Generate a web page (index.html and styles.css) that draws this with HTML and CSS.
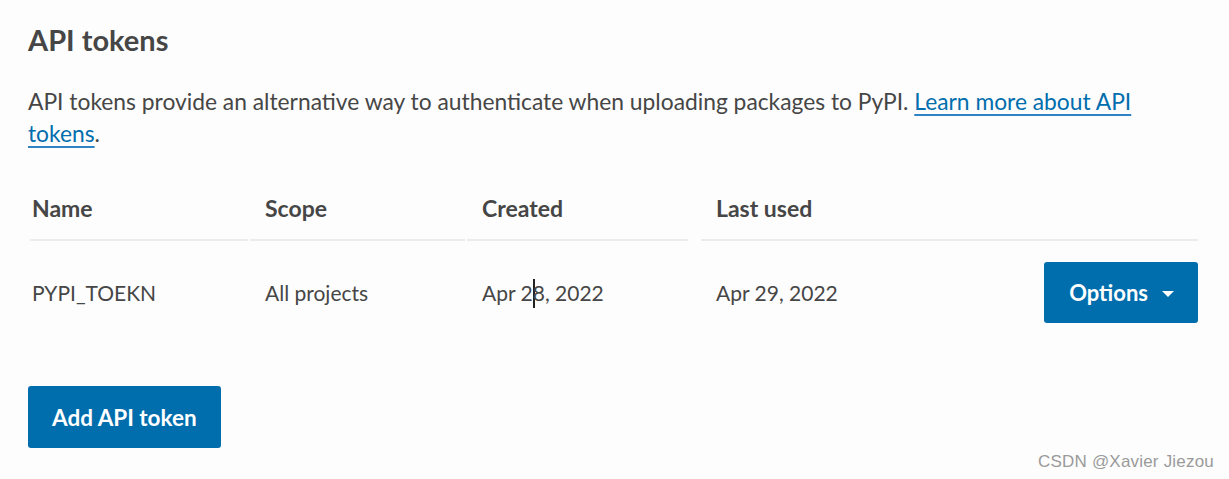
FILE: index.html
```html
<!DOCTYPE html>
<html lang="en">
<head>
<meta charset="utf-8">
<title>API tokens</title>
<link rel="stylesheet" href="styles.css">
</head>
<body>
<main class="section">
  <h2 class="section__title">API tokens</h2>
  <p class="section__lead">API tokens provide an alternative way to authenticate when uploading packages to PyPI. <a class="link" href="#">Learn more about API tokens</a>.</p>
  <table class="tokens">
    <thead>
      <tr>
        <th class="tokens__th tokens__th--name">Name</th>
        <th class="tokens__th tokens__th--scope">Scope</th>
        <th class="tokens__th tokens__th--created">Created</th>
        <th class="tokens__th" colspan="2">Last used</th>
      </tr>
    </thead>
    <tbody>
      <tr>
        <td class="tokens__td tokens__td--name">PYPI_TOEKN</td>
        <td class="tokens__td">All projects</td>
        <td class="tokens__td">Apr 2<span class="caret"></span>8, 2022</td>
        <td class="tokens__td">Apr 29, 2022</td>
        <td class="tokens__td tokens__td--actions">
          <button class="button button--primary button--options" type="button">Options<span class="button__arrow"></span></button>
        </td>
      </tr>
    </tbody>
  </table>
  <button class="button button--primary button--add" type="button">Add API token</button>
</main>
<div class="watermark">CSDN @Xavier Jiezou</div>
</body>
</html>
```
FILE: styles.css
```css
html, body {
  margin: 0;
  padding: 0;
}

body {
  background: #fdfdfd;
  color: #464646;
  font-family: Lato, "Noto Sans", sans-serif;
  width: 1229px;
  height: 479px;
  overflow: hidden;
  position: relative;
}

.section {
  padding: 0 29px 0 28px;
}

.section__title {
  margin: 22px 0 0;
  font-size: 29px;
  line-height: 36px;
  font-weight: 700;
  color: #464646;
}

.section__lead {
  margin: 27px 0 28px;
  font-size: 22.8px;
  line-height: 32px;
  max-width: 1140px;
}

.link {
  color: #006dad;
  text-decoration: underline;
  text-decoration-thickness: 2px;
  text-underline-offset: 4px;
  text-decoration-color: #2f83c3;
}

.tokens {
  width: 1172px;
  border-collapse: separate;
  border-spacing: 2px 0;
  font-size: 21px;
}

.tokens__th {
  position: relative;
  text-align: left;
  font-weight: 700;
  font-size: 23px;
  line-height: 30px;
  padding: 16px 15px 16px;
  border-bottom: 2px solid #ebebeb;
}

.tokens__th--name {
  width: 218px;
  padding-left: 2px;
  padding-right: 0;
  box-sizing: border-box;
}

.tokens__th--scope {
  width: 215px;
  box-sizing: border-box;
}

.tokens__th--created {
  width: 232px;
  box-sizing: border-box;
  border-bottom-color: transparent;
}

.tokens__th--created::after {
  content: "";
  position: absolute;
  left: 0;
  right: 11px;
  bottom: -2px;
  height: 2px;
  background: #ebebeb;
}

.tokens__td {
  line-height: 30px;
  padding: 21px 15px;
  vertical-align: middle;
  white-space: nowrap;
}

.tokens__td--name {
  padding-left: 2px;
}

.tokens__td--actions {
  text-align: right;
  padding-right: 0;
}

.caret {
  display: inline-block;
  width: 0;
  height: 29px;
  border-left: 2px solid #222;
  margin-right: -2px;
  vertical-align: -7px;
}

.button {
  font-family: inherit;
  border: 0;
  cursor: pointer;
}

.button--primary {
  background: #006dad;
  color: #fff;
  font-weight: 700;
  font-size: 22px;
  border-radius: 3px;
}

.button--options {
  display: inline-flex;
  align-items: center;
  gap: 14px;
  height: 61px;
  padding: 0 24px 0 25px;
  vertical-align: middle;
}

.button__arrow {
  width: 0;
  height: 0;
  border-left: 6.5px solid transparent;
  border-right: 6.5px solid transparent;
  border-top: 6px solid #fff;
  margin-top: 2px;
}

.button--add {
  display: block;
  margin-top: 42px;
  height: 62px;
  padding: 0 24px;
  font-size: 22.5px;
}

.watermark {
  position: absolute;
  right: 15px;
  bottom: 7px;
  font-family: "Liberation Sans", Arial, sans-serif;
  font-size: 17px;
  color: #9a9a9a;
  letter-spacing: 0.2px;
}
```
